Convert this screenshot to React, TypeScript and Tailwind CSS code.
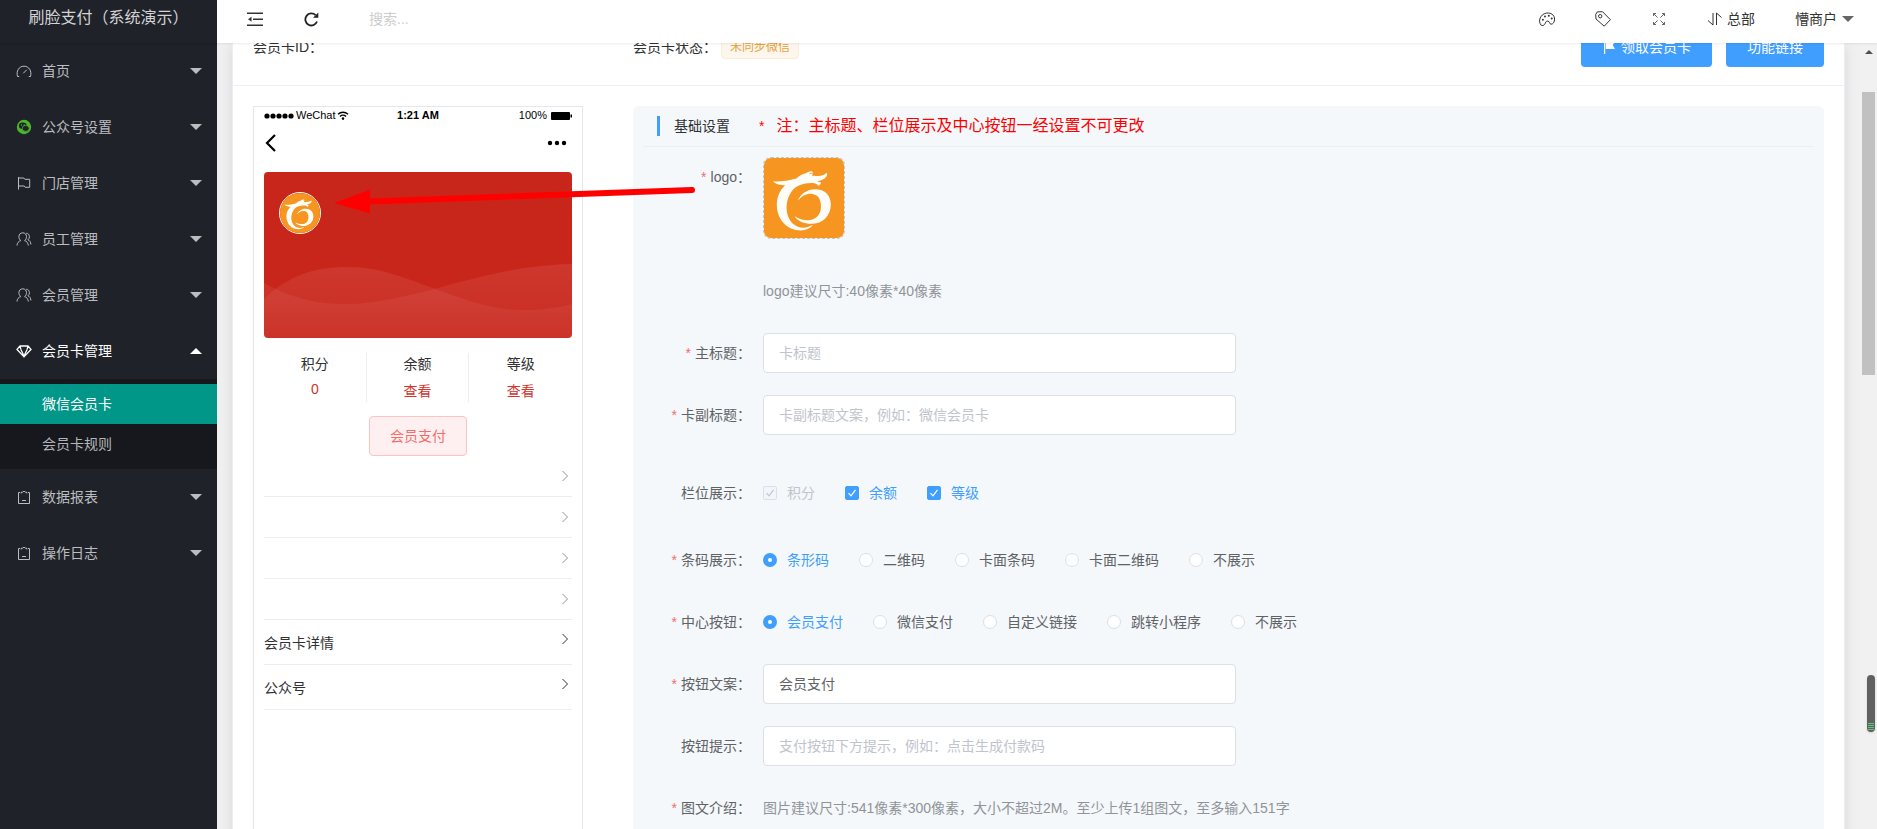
import React from "react";

type IconProps = { className?: string };

const MENU = [
  { label: "首页", icon: "gauge" },
  { label: "公众号设置", icon: "wechat" },
  { label: "门店管理", icon: "flag" },
  { label: "员工管理", icon: "users" },
  { label: "会员管理", icon: "users" },
  {
    label: "会员卡管理",
    icon: "diamond",
    children: ["微信会员卡", "会员卡规则"],
  },
  { label: "数据报表", icon: "board" },
  { label: "操作日志", icon: "board" },
];

const BARCODE_OPTIONS = ["条形码", "二维码", "卡面条码", "卡面二维码", "不展示"];
const CENTER_OPTIONS = [
  "会员支付",
  "微信支付",
  "自定义链接",
  "跳转小程序",
  "不展示",
];

const MenuIcon = ({ name }: { name: string }) => {
  if (name === "wechat") {
    return (
      <svg viewBox="0 0 16 16" className="size-4 shrink-0">
        <circle cx="8" cy="8" r="7.2" fill="#4db52b" />
        <ellipse cx="6.8" cy="6.8" rx="3.9" ry="3.3" fill="#20222a" />
        <ellipse cx="9.7" cy="9.4" rx="3.5" ry="3" fill="#20222a" stroke="#4db52b" strokeWidth="0.8" />
        <g fill="#4db52b">
          <circle cx="5.4" cy="6" r="0.7" />
          <circle cx="8.2" cy="5.9" r="0.7" />
        </g>
      </svg>
    );
  }

  return (
    <svg
      viewBox="0 0 16 16"
      className="size-4 shrink-0"
      fill="none"
      stroke="currentColor"
      strokeWidth="1"
    >
      {name === "gauge" && (
        <path d="M3.2 13.5H1.500C0 8 3 3.200 8 3.200s8 4.800 6.500 10.300h-1.700M7.300 10.300l3.500-3.600" />
      )}
      {name === "flag" && (
        <path d="M2.500 2v12.500M2.500 3h5.300l1 1.300h4.900v8H9.200l-1-1.300H2.500" />
      )}
      {name === "users" && (
        <path d="M1 14.500c.2-2.600 1.500-4.200 3.800-4.900C3.400 8.700 2.900 7 2.900 5.500 2.900 3.400 4.500 1.800 6.700 1.800s3.800 1.600 3.800 3.700c0 1.500-.5 3.200-1.900 4.100 2.300.7 3.400 2.300 3.700 4.900M10.200 2.200c2 .1 3.200 1.600 3.200 3.500 0 1.300-.5 2.400-1.500 3.100 1.900.8 2.900 2.200 3 4.700" />
      )}
      {name === "diamond" && (
        <path
          strokeWidth="1.300"
          d="M4 3h8l3 3.400L8 13.800 1 6.400 4 3zM4.800 6.200 8 13l3.200-6.800M4 3l.8 3.200M12 3l-.8 3.200"
        />
      )}
      {name === "board" && (
        <path d="M4 3.500H2.500v11h11v-11H12M5.200 4.500V3.200h1.600L8 2l1.200 1.200h1.600v1.300M6 11.500h4" />
      )}
    </svg>
  );
};

const Caret = ({ className = "" }: IconProps) => (
  <svg viewBox="0 0 12 6" className={`h-1.5 w-3 ${className}`} fill="currentColor">
    <path d="M0 0h12L6 6z" />
  </svg>
);

const Chevron = ({ className = "" }: IconProps) => (
  <svg
    viewBox="0 0 8 12"
    className={`h-3 w-2 ${className}`}
    fill="none"
    stroke="currentColor"
    strokeWidth="1"
  >
    <path d="M1.500 1 6.500 6l-5 5" />
  </svg>
);

const DragonMark = ({ className = "" }: IconProps) => (
  <svg viewBox="0 0 243 243" className={className}>
    <rect width="243" height="243" fill="#f6951f" />
    <g fill="#fffdf8">
      <path d="M27 71c24 1 47-2 71-9 8-8 18-13 29-16 5-3 12-6 18-6 3 2 4 5 2 8l-1 6c13 1 27 1 38-4l6-5c3 3 2 8-1 12-6 8-16 12-28 14 4 2 9 3 12 2 0 6-3 10-8 11-4-7-13-9-22-8-24 1-45 7-57 23-13 17-19 38-17 61 4 32 25 51 50 52 9 0 18-3 30-9-8 11-22 17-38 17-41 0-70-32-72-74-1-27 8-46 25-63-12 0-28-2-37-12z" />
      <path d="M103 130c6-20 28-35 53-35 28 0 47 18 47 46 0 34-25 59-59 59-22 0-42-8-51-23 13 8 26 12 40 12 24 0 40-17 40-42 0-23-9-36-26-38-17-2-32 6-44 21z" />
    </g>
    <path d="M137 49c3-3 6-4 9-4-1 3-4 5-9 4z" fill="#f6951f" />
  </svg>
);

const Sidebar = () => {
  return (
    <aside className="w-[217px] shrink-0 bg-[#20222a] text-[#bcbdbf]">
      <div className="h-[43px] text-center text-base leading-9 text-[#d2d3d4] shadow-[0_1px_2px_rgba(0,0,0,0.15)]">
        刷脸支付（系统演示）
      </div>

      <nav>
        <ul>
          {MENU.map((item) => (
            <li key={item.label} className={item.children ? "text-white" : ""}>
              <button
                type="button"
                className="flex h-14 w-full items-center gap-[10px] pr-[15px] pl-4 text-left text-sm"
              >
                <MenuIcon name={item.icon} />
                <span className="flex-1">{item.label}</span>
                <Caret className={item.children ? "rotate-180" : ""} />
              </button>

              {item.children && (
                <ul className="bg-[#17181d] py-[5px]">
                  {item.children.map((child, i) => (
                    <li key={child}>
                      <a
                        href="#"
                        className={
                          i === 0
                            ? "block bg-[#009688] pl-[42px] text-sm leading-10 text-white"
                            : "block pl-[42px] text-sm leading-10 text-[#b5b6b8]"
                        }
                      >
                        {child}
                      </a>
                    </li>
                  ))}
                </ul>
              )}
            </li>
          ))}
        </ul>
      </nav>
    </aside>
  );
};

const Topbar = () => {
  return (
    <header className="z-10 flex h-[43px] shrink-0 items-center bg-white pb-[6px] pl-[30px] text-sm text-[#333] shadow-[0_1px_2px_rgba(0,0,0,0.08)]">
      <button type="button" aria-label="收起菜单">
        <svg viewBox="0 0 16 16" className="size-4" fill="none" stroke="currentColor" strokeWidth="1.600">
          <path d="M0 2.300h16M6 8.300h10M0 14.300h16" />
          <path d="M4.500 5.800v5L1 8.300z" fill="currentColor" stroke="none" />
        </svg>
      </button>
      <button type="button" aria-label="刷新" className="ml-10">
        <svg viewBox="0 0 16 16" className="size-4" fill="none" stroke="#222" strokeWidth="1.800">
          <path d="M12.600 4.200A6 6 0 1 0 14 10.500" />
          <path d="M15.300 1.500v5.200h-5.200z" fill="#222" stroke="none" />
        </svg>
      </button>
      <input
        type="text"
        aria-label="搜索"
        placeholder="搜索..."
        className="ml-[50px] w-48 outline-none placeholder:text-[#ccc]"
      />

      <div className="ml-auto flex items-center pr-[23px]">
        <button type="button" aria-label="主题" className="w-14">
          <svg viewBox="0 0 16 16" className="mx-auto size-4" fill="none" stroke="currentColor">
            <path d="M2 14.200C.2 12 .1 8.500 1.700 5.900 3.500 3 6.500 1.800 9.600 2c3.300.2 6 2.600 6 6 0 3.100-1.700 5.300-3.500 5.200-2.100-.1-1-2.800-3.200-3.100-2.400-.3-2.100 1.700-3.200 3.200-1 1.300-2.700 1.600-3.700.9z" />
            <g fill="currentColor" stroke="none">
              <circle cx="3.900" cy="8.700" r="1" />
              <circle cx="6" cy="5.500" r="1" />
              <circle cx="9.800" cy="4.800" r="1" />
              <circle cx="12.700" cy="7.600" r="1" />
            </g>
          </svg>
        </button>
        <button type="button" aria-label="便签" className="w-14">
          <svg viewBox="0 0 16 16" className="mx-auto size-4" fill="none" stroke="currentColor">
            <path d="M.700 3.500 2.300.9l5.200-.2 7.900 8-6.200 6.500L1 8z" />
            <circle cx="5.200" cy="5.200" r="1.700" />
          </svg>
        </button>
        <button type="button" aria-label="全屏" className="w-14">
          <svg viewBox="0 0 16 16" className="mx-auto size-4 text-[#666]" fill="none" stroke="currentColor">
            <path d="M2.500 5V2.500H5M2.500 2.500l4 4M11 2.500h2.500V5M13.500 2.500l-4 4M2.500 11v2.500H5M2.500 13.500l4-4M11 13.500h2.500V11M13.500 13.500l-4-4" />
          </svg>
        </button>
        <button type="button" className="ml-5 flex items-center gap-1">
          <svg viewBox="0 0 16 16" className="size-4" fill="none" stroke="currentColor">
            <path d="M1 9.500 6 14V2M9.500 14V2l5 4.500" />
          </svg>
          总部
        </button>
        <button type="button" className="ml-10 flex items-center gap-[5px]">
          懵商户
          <Caret className="text-[#666]" />
        </button>
      </div>
    </header>
  );
};

const PhonePreview = () => {
  return (
    <section className="w-[330px] shrink-0 border border-[#e4e7ed] px-[10px] text-sm">
      <div className="grid h-[18px] grid-cols-3 items-center text-[11px] text-black">
        <span className="flex items-center">
          <svg viewBox="0 0 30 6" className="mr-0.5 h-1.5 w-[30px]">
            <circle cx="3" cy="3" r="2.600" />
            <circle cx="9" cy="3" r="2.600" />
            <circle cx="15" cy="3" r="2.600" />
            <circle cx="21" cy="3" r="2.600" />
            <circle cx="27" cy="3" r="2.600" />
          </svg>
          WeChat
          <svg viewBox="0 0 12 9" className="ml-px h-[9px] w-3" fill="none" stroke="#000" strokeWidth="1.400">
            <path d="M1 3.300a7.200 7.200 0 0 1 10 0M3 5.500a4.300 4.300 0 0 1 6 0" />
            <circle cx="6" cy="7.600" r="0.600" fill="#000" />
          </svg>
        </span>
        <span className="text-center font-bold">1:21 AM</span>
        <span className="flex items-center justify-end gap-1">
          100%
          <svg viewBox="0 0 21 8" className="h-2 w-[21px]">
            <rect width="19" height="8" rx="1" />
            <path d="M19.500 2.500h1.500v3h-1.500z" />
          </svg>
        </span>
      </div>

      <div className="flex h-[47px] items-center justify-between pr-[5px] pb-3 pl-px">
        <svg viewBox="0 0 12 18" className="h-[18px] w-3" fill="none" stroke="#000" strokeWidth="2.200">
          <path d="M10 1 2 9l8 8" />
        </svg>
        <svg viewBox="0 0 20 6" className="h-1.5 w-5">
          <circle cx="3" cy="3" r="2.200" />
          <circle cx="10" cy="3" r="2.200" />
          <circle cx="17" cy="3" r="2.200" />
        </svg>
      </div>

      {/* 会员卡卡面 */}
      <div className="relative h-[166px] overflow-hidden rounded bg-[#c9261b] px-[15px] py-5">
        <svg viewBox="0 0 308 166" preserveAspectRatio="none" className="absolute inset-0 size-full">
          <defs>
            <linearGradient id="wave" x1="0" y1="0" x2="0" y2="1">
              <stop offset="0" stopColor="#fff" stopOpacity="0.080" />
              <stop offset="1" stopColor="#fff" stopOpacity="0.030" />
            </linearGradient>
          </defs>
          <path fill="url(#wave)" d="M0 127C24 104 50 95 83 95c34 0 60 12 88 22s56 21 88 21c18 0 34-2 49-6v34H0z" />
          <path fill="url(#wave)" d="M0 111c25 14 50 21 81 21 32 0 60-8 90-15 44-12 86-24 137-25v74H0z" />
        </svg>
        <DragonMark className="relative size-[42px] rounded-full border border-white" />
      </div>

      <div className="mt-[15px] grid h-12 grid-cols-3 text-center text-[#303133]">
        <div className="border-r border-[#ebeef5]">
          <p className="leading-[22px]">积分</p>
          <p className="pt-[3px] leading-[22px] text-[#d0342c]">0</p>
        </div>
        <div className="border-r border-[#ebeef5]">
          <p className="leading-[22px]">余额</p>
          <a href="#" className="block pt-[5px] leading-[22px] text-[#d0342c]">
            查看
          </a>
        </div>
        <div>
          <p className="leading-[22px]">等级</p>
          <a href="#" className="block pt-[5px] leading-[22px] text-[#d0342c]">
            查看
          </a>
        </div>
      </div>

      <div className="mt-[15px] text-center">
        <button
          type="button"
          className="h-10 rounded border border-[#fbc4c4] bg-[#fef0f0] px-5 text-[#f56c6c]"
        >
          会员支付
        </button>
      </div>

      <ul className="text-[#303133]">
        {[0, 1, 2, 3].map((n) => (
          <li key={n} className="flex h-[41px] items-center justify-end border-b border-[#eee] pr-[3px]">
            <Chevron className="text-[#909399]" />
          </li>
        ))}
        {["会员卡详情", "公众号"].map((label) => (
          <li key={label} className="flex h-[45px] justify-between border-b border-[#eee] pr-[3px]">
            <span className="leading-[46px]">{label}</span>
            <Chevron className="mt-[13px]" />
          </li>
        ))}
      </ul>
    </section>
  );
};

type FormItemProps = {
  label: string;
  htmlFor?: string;
  required?: boolean;
  className?: string;
  children: React.ReactNode;
};

const FormItem = ({ label, htmlFor, required, className = "", children }: FormItemProps) => (
  <div className={`mb-[22px] flex text-sm leading-10 text-[#606266] ${className}`}>
    <label htmlFor={htmlFor} className="w-[108px] shrink-0 text-right">
      {required && <span className="mr-1 text-[#f56c6c]">*</span>}
      {label}
    </label>
    <div className="ml-3 min-w-0 flex-1">{children}</div>
  </div>
);

type TextInputProps = { id: string; placeholder?: string; defaultValue?: string };

const TextInput = (props: TextInputProps) => (
  <input
    type="text"
    className="block h-10 w-[45%] rounded border border-[#dcdfe6] bg-white px-[15px] text-[#606266] outline-none placeholder:text-[#c0c4cc]"
    {...props}
  />
);

const RadioGroup = ({ name, options }: { name: string; options: string[] }) => (
  <div role="radiogroup" className="flex gap-[30px]">
    {options.map((option, i) => (
      <label key={option} className="flex items-center gap-[10px] has-checked:text-[#409eff]">
        <input
          type="radio"
          name={name}
          defaultChecked={i === 0}
          className="size-3.5 appearance-none rounded-full border border-[#dcdfe6] bg-white checked:border-[5px] checked:border-[#409eff]"
        />
        {option}
      </label>
    ))}
  </div>
);

const Checkbox = ({ label, disabled }: { label: string; disabled?: boolean }) => (
  <label
    className={`flex items-center gap-[10px] ${disabled ? "text-[#c0c4cc]" : "text-[#409eff]"}`}
  >
    <span className="grid size-3.5 *:col-start-1 *:row-start-1">
      <input
        type="checkbox"
        defaultChecked
        disabled={disabled}
        className="size-3.5 appearance-none rounded-[2px] border border-[#409eff] bg-[#409eff] disabled:border-[#dcdfe6] disabled:bg-[#f2f6fc]"
      />
      <svg
        viewBox="0 0 14 14"
        className="pointer-events-none size-3.5"
        fill="none"
        stroke={disabled ? "#c0c4cc" : "#fff"}
        strokeWidth="1.200"
      >
        <path d="M3.500 7.200 6 9.800l4.500-6" />
      </svg>
    </span>
    {label}
  </label>
);

const SettingsForm = () => {
  return (
    <form className="min-w-0 flex-1 rounded-md bg-[#f4f8fb] px-[10px]">
      <div className="mb-[10px] flex h-[41px] items-center border-b border-[#ebeef2] pl-[14px] text-sm text-[#303133]">
        <span className="mr-[14px] h-5 w-[3px] bg-[#409eff]" />
        <h2>基础设置</h2>
        <p className="ml-[29px] flex items-center gap-3 text-[#f00]">
          <span>*</span>
          <span className="text-base leading-6">
            注：主标题、栏位展示及中心按钮一经设置不可更改
          </span>
        </p>
      </div>

      <FormItem label="logo：" required>
        <button
          type="button"
          aria-label="上传logo"
          className="mb-8 block size-[82px] overflow-hidden rounded-lg border border-dashed border-[#c0c4cc]"
        >
          <DragonMark className="size-20" />
        </button>
        <p className="text-[#909399]">logo建议尺寸:40像素*40像素</p>
      </FormItem>

      <FormItem label="主标题：" htmlFor="title" required>
        <TextInput id="title" placeholder="卡标题" />
      </FormItem>
      <FormItem label="卡副标题：" htmlFor="subtitle" required>
        <TextInput id="subtitle" placeholder="卡副标题文案，例如：微信会员卡" />
      </FormItem>

      <FormItem label="栏位展示：" className="pt-4 pb-[5px]">
        <div className="flex gap-[30px]">
          <Checkbox label="积分" disabled />
          <Checkbox label="余额" />
          <Checkbox label="等级" />
        </div>
      </FormItem>

      <FormItem label="条码展示：" required>
        <RadioGroup name="barcode" options={BARCODE_OPTIONS} />
      </FormItem>
      <FormItem label="中心按钮：" required>
        <RadioGroup name="center" options={CENTER_OPTIONS} />
      </FormItem>
      <FormItem label="按钮文案：" htmlFor="button-text" required>
        <TextInput id="button-text" defaultValue="会员支付" />
      </FormItem>
      <FormItem label="按钮提示：" htmlFor="button-tip">
        <TextInput id="button-tip" placeholder="支付按钮下方提示，例如：点击生成付款码" />
      </FormItem>
      <FormItem label="图文介绍：" required>
        <p className="text-[#909399]">
          图片建议尺寸:541像素*300像素，大小不超过2M。至少上传1组图文，至多输入151字
        </p>
      </FormItem>
    </form>
  );
};

const App = () => {
  return (
    <div className="relative flex h-screen overflow-hidden bg-[#f0f0f0] font-['Liberation_Sans','Noto_Sans_CJK_SC',sans-serif]">
      <Sidebar />

      <div className="flex min-w-0 flex-1 flex-col">
        <Topbar />

        <div className="flex min-h-0 flex-1">
          <main className="min-w-0 flex-1 overflow-hidden px-[15px]">
            <div className="border-x border-[#ebeef5] bg-white shadow-[0_2px_12px_rgba(0,0,0,0.1)]">
              <div className="flex h-[43px] items-end overflow-hidden border-b border-[#ebeef5] px-5 pb-[18px] text-sm leading-10 text-[#303133]">
                <span className="w-[380px]">会员卡ID：</span>
                <span className="flex items-center gap-1">
                  会员卡状态：
                  <span className="h-6 rounded border border-[#faecd8] bg-[#fdf6ec] px-2 text-xs leading-[22px] text-[#e6a23c]">
                    未同步微信
                  </span>
                </span>
                <div className="ml-auto flex gap-[14px] text-white">
                  <button
                    type="button"
                    className="flex h-10 items-center gap-[5px] rounded bg-[#409eff] px-[21px]"
                  >
                    <svg viewBox="0 0 14 14" className="size-3.5" fill="currentColor">
                      <path d="M2 1h1.200v13H2zM3.800 1.500H13l-2.200 3.700L13 9H3.800z" />
                    </svg>
                    领取会员卡
                  </button>
                  <button type="button" className="h-10 rounded bg-[#409eff] px-[21px]">
                    功能链接
                  </button>
                </div>
              </div>

              <div className="flex gap-[50px] p-5">
                <PhonePreview />
                <SettingsForm />
              </div>
            </div>
          </main>

          {/* 滚动条 */}
          <div className="w-[17px] shrink-0 bg-[#f1f1f1] pt-[7px] pr-0.5 pl-0.5">
            <svg viewBox="0 0 8 4" className="mx-auto h-1 w-2" fill="#505050">
              <path d="M0 4h8L4 0z" />
            </svg>
            <div className="mt-[38px] h-[283px] bg-[#c1c1c1]" />
          </div>
        </div>
      </div>

      {/* logo 位置指引 */}
      <svg
        viewBox="0 0 364 28"
        className="pointer-events-none absolute top-[187px] left-[334px] z-20 h-7 w-[364px]"
      >
        <path d="M36 14.500 358 3" stroke="#f00" strokeWidth="6" strokeLinecap="round" />
        <path d="M0 16 36 2.500v24z" fill="#f00" />
      </svg>

      <div className="absolute top-[675px] right-0.5 z-20 flex h-[57px] w-2 flex-col justify-end gap-px rounded-full bg-[#606060] px-px pb-0.5 shadow">
        <span className="h-px bg-[#5fc57a]" />
        <span className="h-px bg-[#5fc57a]" />
        <span className="h-px bg-[#5fc57a]" />
        <span className="h-px bg-[#5fc57a]" />
      </div>
    </div>
  );
};

export default App;
